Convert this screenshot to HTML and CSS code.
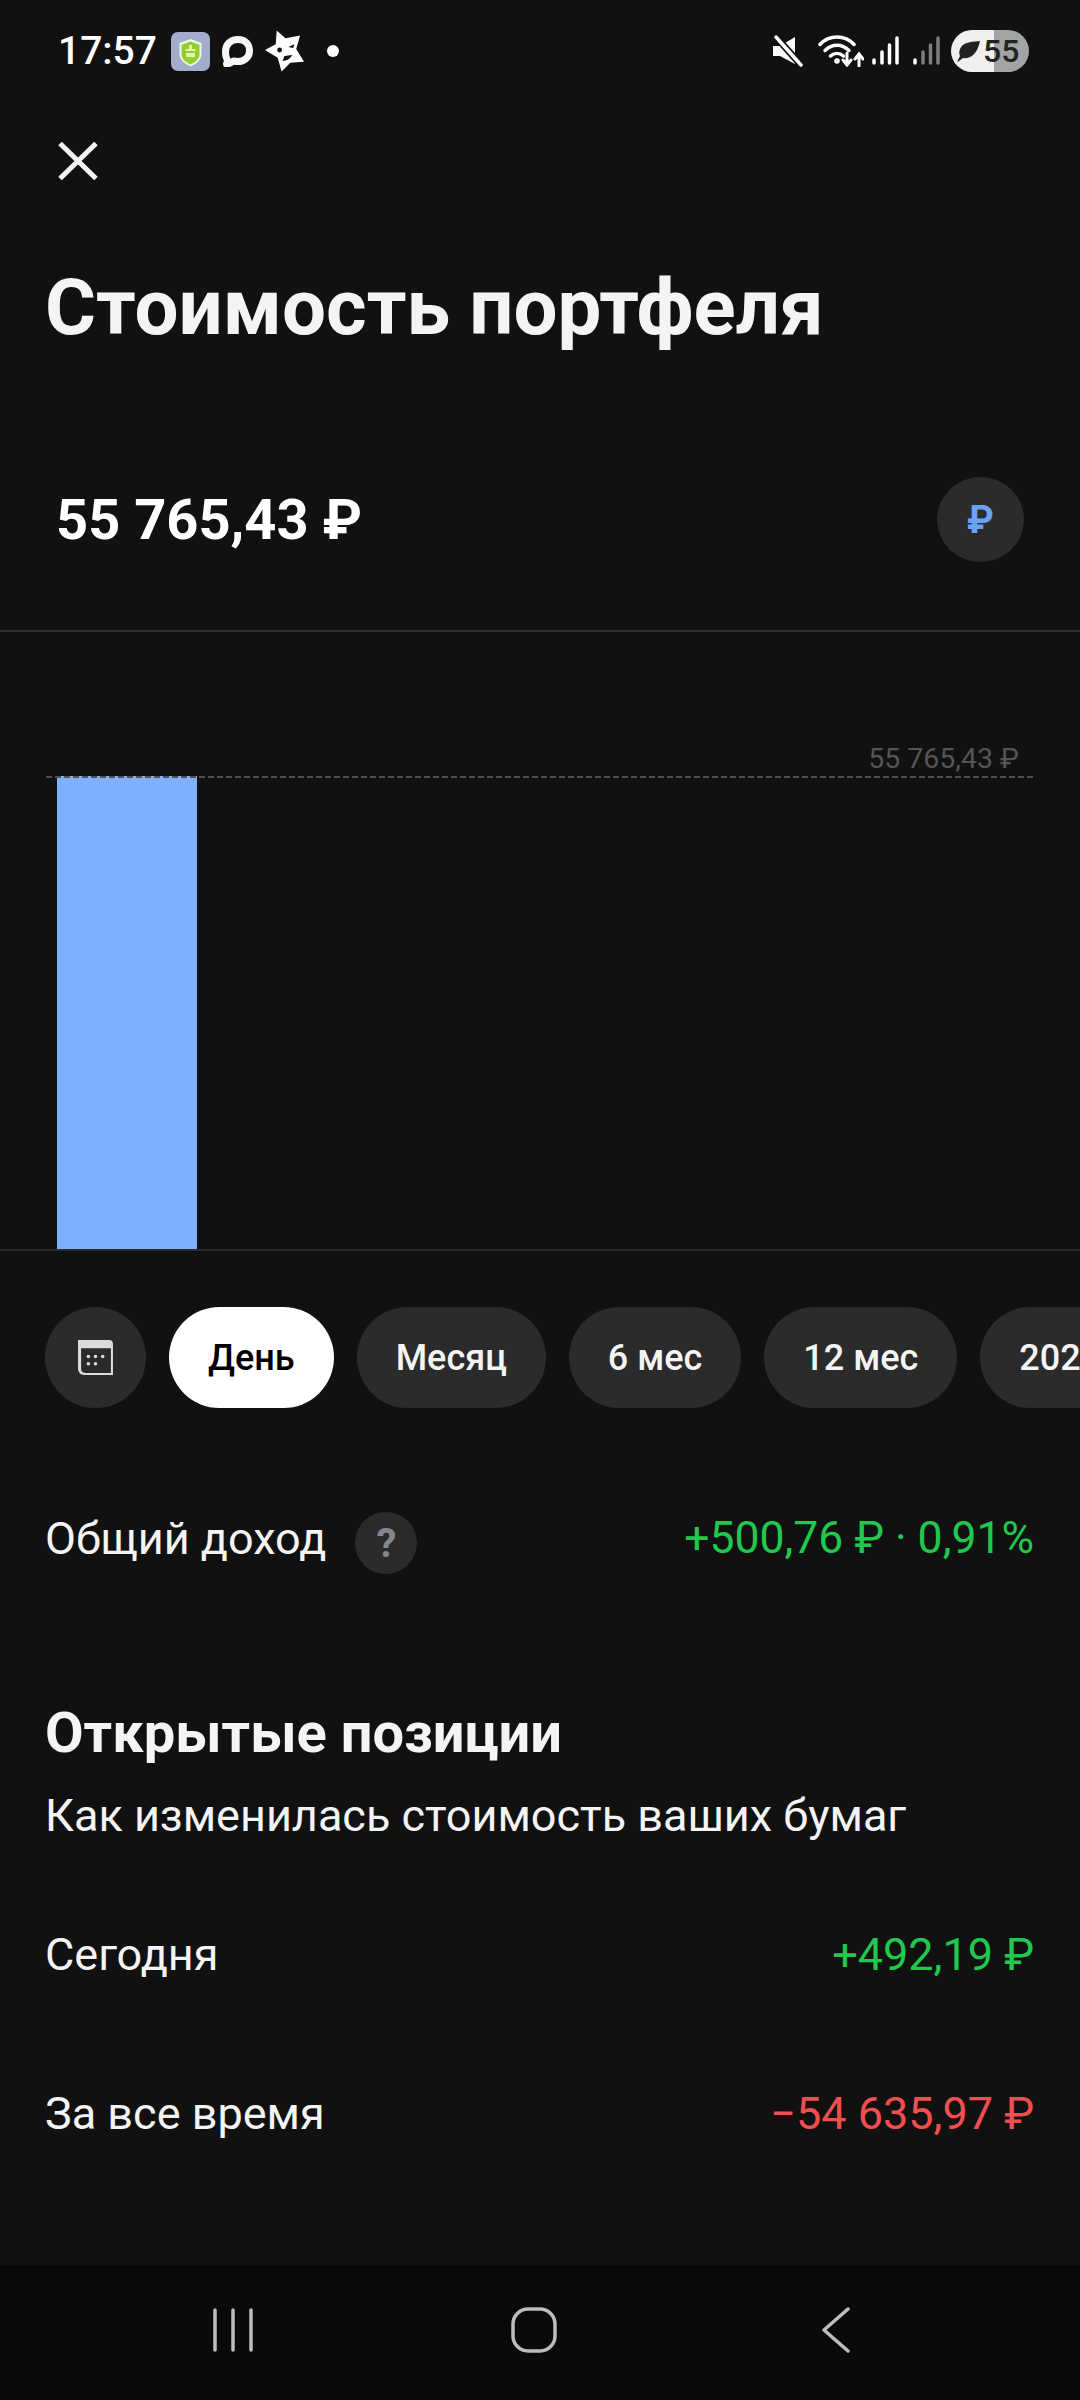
FILE: index.html
```html
<!DOCTYPE html>
<html lang="ru">

<head>
    <meta charset="UTF-8">
    <meta name="viewport" content="width=device-width, initial-scale=1.0">
    <title>Стоимость портфеля</title>
    <link rel="stylesheet" href="styles.css">
</head>

<body>
    <div class="screen">
        <div class="statusbar">
            <div class="status-left">
                <span class="clock">17:57</span>
                <svg class="ic-app" viewBox="0 0 39 39">
                    <rect width="39" height="39" rx="7" fill="#a3acca"/>
                    <path d="M19.500 7l11 4v11c0 6-5 9.500-11 12.500-6-3-11-6.500-11-12.500V11z" fill="#f2f6e4"/>
                    <path d="M19.500 9.500l9 3.200v9.300c0 5-4 8-9 10.500-5-2.500-9-5.500-9-10.500v-9.300z" fill="#93cf2c"/>
                    <path d="M18 13h3v4h3.500v2h-10v-2H18zM15 21h9v4h-9z" fill="#e4f2bd"/>
                </svg>
                <svg class="ic-chat" viewBox="0 0 31 31">
                    <path d="M4.500 28c1-2 1-3.500.5-5C3.500 21 3.500 18 3.500 15.500 3.500 8.500 8.500 3.500 16 3.500S27.500 8.500 27.500 15 22 25.500 15.500 25.500c-1.500 0-3-.3-4-.5-2 1.500-4 3-7 3z" fill="none" stroke="#f6f6f6" stroke-width="7" stroke-linejoin="round"/>
                </svg>
                <svg class="ic-star" viewBox="0 0 40 42">
                    <path d="M12 0l9 8 15-3-4 14 8 13-14 1-9 9-4-14L0 20l11-6z" fill="#fff"/>
                    <circle cx="15" cy="20" r="2.500" fill="#111112"/>
                    <path d="M24 17l6-3-1 4zM18 31c4 0 8-2 10-6l-8 1z" fill="#111112"/>
                </svg>
                <span class="status-dot"></span>
            </div>
            <div class="status-right">
                <svg class="ic-mute" viewBox="0 0 30 32">
                    <path d="M0 11h7L22 2v27L7 21H0z" fill="#fff"/>
                    <path d="M3 2l25 28" stroke="#111112" stroke-width="7"/>
                    <path d="M3 2l25 28" stroke="#fff" stroke-width="3.500" stroke-linecap="round"/>
                </svg>
                <svg class="ic-wifi" viewBox="0 0 46 32">
                    <g fill="none" stroke="#fff" stroke-width="3.500" stroke-linecap="round">
                        <path d="M2 9.500C11 -.5 27 -.5 36 9.500"/>
                        <path d="M7 15.500c7-7 17-7 24 0"/>
                        <path d="M12.500 21c4-3.500 9-3.500 13 0"/>
                        <path d="M29 18v11M25 25l4 5 4-5M41 31V20M37 24l4-5 4 5" stroke-width="3"/>
                    </g>
                    <circle cx="19" cy="26" r="2.800" fill="#fff"/>
                </svg>
                <svg class="ic-signal" viewBox="0 0 27 30">
                    <g fill="none" stroke="#fff" stroke-width="3.500" stroke-linecap="round">
                        <path d="M2 27v-3M10 27v-11M17.500 27V9M25 27V2"/>
                    </g>
                </svg>
                <svg class="ic-signal" viewBox="0 0 27 30">
                    <path d="M2 27v-3" fill="none" stroke="#fff" stroke-width="3.500" stroke-linecap="round"/>
                    <g fill="none" stroke="#7f7f7f" stroke-width="3.500" stroke-linecap="round">
                        <path d="M10 27v-11M17.500 27V9M25 27V2"/>
                    </g>
                </svg>
                <div class="battery">
                    <svg class="ic-leaf" viewBox="0 0 26 24">
                        <path d="M1 23c3-1 4-3 6-4 6 1 14-2 17-17-6 1-17 0-20 8-1 3-1 5 0 7z" fill="#222"/>
                    </svg>
                    <span>55</span>
                </div>
            </div>
        </div>

        <div class="topbar">
            <svg class="ic-close" viewBox="0 0 40 38">
                <path d="M2 1.500l36 35M38 1.500l-36 35" fill="none" stroke="#f4f4f4" stroke-width="5"/>
            </svg>
        </div>

        <h1 class="title">Стоимость портфеля</h1>

        <div class="summary">
            <span class="amount">55 765,43 ₽</span>
            <div class="currency">₽</div>
        </div>

        <div class="chart">
            <div class="chart-top">
                <span>55 765,43 ₽</span>
            </div>
            <div class="bar"></div>
        </div>

        <div class="chips">
            <div class="chip chip-icon">
                <svg class="ic-calendar" viewBox="0 0 36 36">
                    <path d="M1 1h30a4 4 0 0 1 4 4v30H7a6 6 0 0 1-6-6z" fill="#dcdcdc"/>
                    <path d="M4 9h29v24H8a4 4 0 0 1-4-4z" fill="#2b2b2c"/>
                    <g fill="#dcdcdc">
                        <circle cx="11" cy="17" r="1.700"/>
                        <circle cx="18" cy="17" r="1.700"/>
                        <circle cx="25" cy="17" r="1.700"/>
                        <circle cx="11" cy="24" r="1.700"/>
                        <circle cx="18" cy="24" r="1.700"/>
                    </g>
                </svg>
            </div>
            <div class="chip chip-active">День</div>
            <div class="chip">Месяц</div>
            <div class="chip">6 мес</div>
            <div class="chip">12 мес</div>
            <div class="chip">2024</div>
        </div>

        <div class="row row-income">
            <div class="row-label">
                <span class="raised">Общий доход</span>
                <span class="help">?</span>
            </div>
            <span class="plus raised">+500,76 ₽ · 0,91%</span>
        </div>

        <h2 class="section-title">Открытые позиции</h2>
        <p class="section-sub">Как изменилась стоимость ваших бумаг</p>

        <div class="row row-today">
            <span>Сегодня</span>
            <span class="plus">+492,19 ₽</span>
        </div>
        <div class="row row-total">
            <span>За все время</span>
            <span class="minus">−54 635,97 ₽</span>
        </div>

        <div class="navbar">
            <svg class="ic-recents" viewBox="0 0 42 44">
                <path d="M3 2v40M21 2v40M39 2v40" fill="none" stroke="#bdbdbd" stroke-width="3.500" stroke-linecap="round"/>
            </svg>
            <svg class="ic-home" viewBox="0 0 46 46">
                <rect x="2" y="2" width="42" height="42" rx="15" fill="none" stroke="#bdbdbd" stroke-width="3.500"/>
            </svg>
            <svg class="ic-back" viewBox="0 0 30 46">
                <path d="M27 2L3 23l24 21" fill="none" stroke="#bdbdbd" stroke-width="3.500" stroke-linecap="round" stroke-linejoin="round"/>
            </svg>
        </div>
    </div>
</body>

</html>
```

FILE: styles.css
```css
* {
    margin: 0;
    box-sizing: border-box;
    font-family: Roboto, "Noto Sans", sans-serif;
}

body {
    background-color: #111112;
}

.screen {
    display: flex;
    flex-direction: column;
    width: 1080px;
    height: 2400px;
    overflow: hidden;
    color: #f4f4f4;
    background-color: #111112;
}

/* status bar */
.statusbar {
    display: flex;
    justify-content: space-between;
    align-items: center;
    height: 102px;
    padding: 0 51px 0 58px;
    flex-shrink: 0;
}

.status-left,
.status-right {
    display: flex;
    align-items: center;
}

.clock {
    width: 113px;
    font-size: 39px;
    font-weight: 500;
    color: #fff;
}

.ic-app {
    width: 39px;
    height: 39px;
    margin-right: 12px;
}

.ic-chat {
    width: 31px;
    height: 31px;
    margin-right: 12px;
}

.ic-star {
    width: 39px;
    height: 42px;
    margin-right: 23px;
}

.status-dot {
    width: 12px;
    height: 12px;
    border-radius: 50%;
    background-color: #fff;
}

.ic-mute {
    width: 30px;
    height: 32px;
    margin-right: 15px;
}

.ic-wifi {
    width: 46px;
    height: 32px;
    margin-right: 8px;
}

.ic-signal {
    width: 27px;
    height: 30px;
    margin-right: 14px;
}

.ic-signal + .battery {
    margin-left: -3px;
}

.battery {
    display: flex;
    align-items: center;
    gap: 1px;
    width: 78px;
    height: 42px;
    padding-left: 5px;
    border-radius: 21px;
    color: #222;
    background: linear-gradient(to right, #f0f0f0 55%, #a3a3a3 55%);
}

.battery span {
    font-size: 32px;
    font-weight: 500;
}

.ic-leaf {
    width: 26px;
    height: 24px;
    flex-shrink: 0;
}

/* header */
.topbar {
    height: 98px;
    padding: 40px 0 0 58px;
    flex-shrink: 0;
}

.ic-close {
    display: block;
    width: 40px;
    height: 38px;
}

.title {
    padding-left: 45px;
    margin-top: 58px;
    font-size: 78px;
    line-height: 100px;
    font-weight: 700;
}

.summary {
    display: flex;
    justify-content: space-between;
    align-items: center;
    height: 87px;
    margin-top: 118px;
    padding: 0 56px 0 56px;
    flex-shrink: 0;
}

.amount {
    font-size: 56px;
    font-weight: 700;
    color: #fff;
}

.currency {
    display: flex;
    justify-content: center;
    align-items: center;
    width: 87px;
    height: 85px;
    border-radius: 50%;
    font-size: 38px;
    font-weight: 700;
    color: #69a2f5;
    background-color: #2b2b2c;
}

/* chart */
.chart {
    position: relative;
    display: flex;
    align-items: flex-end;
    height: 621px;
    margin-top: 67px;
    padding-left: 57px;
    border-top: 2px solid #2c2c2d;
    border-bottom: 2px solid #2c2c2d;
    flex-shrink: 0;
}

.chart-top {
    position: absolute;
    top: 110px;
    left: 46px;
    width: 987px;
    padding: 0 14px 2px 0;
    text-align: right;
    font-size: 28.5px;
    line-height: 34px;
    color: #555;
    background: repeating-linear-gradient(to right, #505050 0 6px, transparent 6px 9px) bottom / 100% 2px no-repeat;
}

.bar {
    width: 140px;
    height: 473px;
    background-color: #7fb0ff;
}

/* period chips */
.chips {
    display: flex;
    gap: 23px;
    margin-top: 56px;
    padding-left: 45px;
    flex-shrink: 0;
}

.chip {
    display: flex;
    justify-content: center;
    align-items: center;
    height: 101px;
    padding: 0 39px;
    border-radius: 51px;
    font-size: 36px;
    font-weight: 500;
    color: #f4f4f4;
    background-color: #2b2b2c;
    flex-shrink: 0;
}

.chip-icon {
    width: 101px;
    padding: 0;
}

.chip-active {
    color: #000;
    background-color: #fff;
}

.ic-calendar {
    width: 37px;
    height: 37px;
}

/* rows */
.row {
    display: flex;
    justify-content: space-between;
    align-items: center;
    padding: 0 46px 0 45px;
    font-size: 45px;
    flex-shrink: 0;
}

.row-label {
    display: flex;
    align-items: center;
    gap: 29px;
}

.raised {
    padding-bottom: 10px;
}

.help {
    display: flex;
    justify-content: center;
    align-items: center;
    width: 62px;
    height: 62px;
    border-radius: 50%;
    font-size: 40px;
    font-weight: 700;
    color: #85858c;
    background-color: #2b2b2c;
}

.row-income {
    height: 62px;
    margin-top: 104px;
}

.row-income .plus {
    font-size: 44.5px;
}

.plus {
    color: #20c94d;
}

.minus {
    color: #f04f4f;
}

.section-title {
    padding-left: 45px;
    margin-top: 126px;
    font-size: 56px;
    line-height: 66px;
    font-weight: 700;
}

.section-sub {
    padding-left: 45px;
    margin-top: 24px;
    font-size: 45px;
    line-height: 52px;
}

.row-today {
    height: 52px;
    margin-top: 86px;
}

.row-total {
    height: 52px;
    margin-top: 107px;
}

/* system navigation */
.navbar {
    display: flex;
    align-items: center;
    height: 135px;
    padding-bottom: 5px;
    margin-top: auto;
    background-color: #0a0a0b;
    flex-shrink: 0;
}

.ic-recents {
    width: 42px;
    height: 44px;
    margin-left: 212px;
}

.ic-home {
    width: 46px;
    height: 46px;
    margin-left: 257px;
}

.ic-back {
    width: 30px;
    height: 46px;
    margin-left: 264px;
}
```
